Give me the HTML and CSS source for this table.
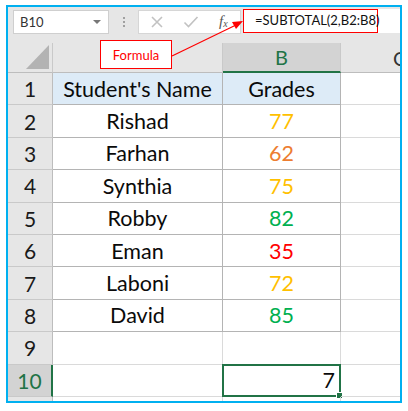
FILE: index.html
```html
<!DOCTYPE html>
<html>
<head>
<meta charset="utf-8">
<link rel="stylesheet" href="styles.css">
</head>
<body>
<div class="frame">
  <div class="toolbar">
    <div class="namebox"><span>B10</span><span class="dd"></span></div>
    <div class="dots"><i></i><i></i><i></i></div>
    <div class="fxbox">
      <svg class="ico x" width="14" height="14" viewBox="0 0 14 14"><path d="M2 2 L12 12 M12 2 L2 12" stroke="#c2c2c2" stroke-width="1.6" fill="none"/></svg>
      <svg class="ico chk" width="16" height="14" viewBox="0 0 16 14"><path d="M1.5 7.5 L5.5 11.5 L14.5 2" stroke="#c2c2c2" stroke-width="1.6" fill="none"/></svg>
      <span class="fx">f<sub>x</sub></span>
    </div>
    <div class="formulabar"><span class="formula">=SUBTOTAL(2,B2:B8)</span></div>
  </div>
  <div class="sheet">
    <div class="colhdr corner"><svg width="24" height="26" viewBox="0 0 24 26"><polygon points="0,25 23,25 23,1" fill="#b3b3b3"/></svg></div>
    <div class="colhdr"></div>
    <div class="colhdr sel">B</div>
    <div class="colhdr c"><span>C</span></div>

    <div class="rowhdr">1</div><div class="cell t head">Student's Name</div><div class="cell t head">Grades</div><div class="cell"></div>
    <div class="rowhdr">2</div><div class="cell t">Rishad</div><div class="cell t yel">77</div><div class="cell"></div>
    <div class="rowhdr">3</div><div class="cell t">Farhan</div><div class="cell t org">62</div><div class="cell"></div>
    <div class="rowhdr">4</div><div class="cell t">Synthia</div><div class="cell t yel">75</div><div class="cell"></div>
    <div class="rowhdr">5</div><div class="cell t">Robby</div><div class="cell t grn">82</div><div class="cell"></div>
    <div class="rowhdr">6</div><div class="cell t">Eman</div><div class="cell t red">35</div><div class="cell"></div>
    <div class="rowhdr">7</div><div class="cell t">Laboni</div><div class="cell t yel">72</div><div class="cell"></div>
    <div class="rowhdr">8</div><div class="cell t">David</div><div class="cell t grn">85</div><div class="cell"></div>
    <div class="rowhdr">9</div><div class="cell"></div><div class="cell"></div><div class="cell"></div>
    <div class="rowhdr selrow">10</div><div class="cell"></div><div class="cell active">7<span class="handle"></span></div><div class="cell"></div>
    <div class="rowhdr"></div><div class="cell"></div><div class="cell"></div><div class="cell"></div>
  </div>

  <div class="callout">Formula</div>
  <svg class="arrow" width="396" height="80" viewBox="0 0 396 80">
    <line x1="164" y1="49" x2="228" y2="18" stroke="#ff0000" stroke-width="1.2"/>
    <polygon points="235,14 224,15 228,22" fill="#ff0000"/>
  </svg>
</div>
</body>
</html>
```

FILE: styles.css
```css
html, body {
  margin: 0;
  padding: 0;
  background: #ffffff;
}
body {
  font-family: Lato, "Open Sans", sans-serif;
}
.frame {
  position: relative;
  margin: 5px 0 0 6px;
  width: 396px;
  height: 398px;
  border: 2px solid #00b0f0;
  box-sizing: border-box;
  overflow: hidden;
  background: #ffffff;
}
.toolbar {
  height: 36px;
  background: #e6e6e6;
  display: flex;
  align-items: flex-start;
  padding-top: 3px;
  box-sizing: border-box;
}
.namebox {
  margin-left: 5px;
  width: 96px;
  height: 24px;
  background: #fff;
  border: 1px solid #cfcfcf;
  box-sizing: border-box;
  display: flex;
  align-items: center;
  justify-content: space-between;
  padding: 0 7px 0 6px;
  font-size: 13px;
  color: #333;
}
.dd {
  width: 0;
  height: 0;
  border-left: 4px solid transparent;
  border-right: 4px solid transparent;
  border-top: 4px solid #777;
}
.dots {
  width: 29px;
  height: 24px;
  display: flex;
  flex-direction: column;
  align-items: center;
  justify-content: center;
  gap: 2px;
}
.dots i {
  display: block;
  width: 2px;
  height: 2px;
  background: #a0a0a0;
}
.fxbox {
  width: 103px;
  height: 24px;
  background: #fff;
  border: 1px solid #d6d6d6;
  box-sizing: border-box;
  position: relative;
}
.ico {
  position: absolute;
  top: 4px;
  display: block;
}
.ico.x { left: 11px; }
.ico.chk { left: 44px; }
.fx {
  position: absolute;
  left: 80px;
  top: 1px;
  font-family: "Liberation Serif", serif;
  font-style: italic;
  font-size: 15px;
  color: #555;
  line-height: 18px;
}
.fx sub {
  font-size: 10px;
  vertical-align: -1px;
}
.formulabar {
  margin-left: 2px;
  flex: 1;
  height: 24px;
  background: #fff;
  margin-top: -1px;
}
.formula {
  display: inline-block;
  width: 135px;
  height: 24px;
  border: 1.5px solid #ff0000;
  box-sizing: border-box;
  font-size: 13px;
  line-height: 21px;
  padding-left: 11px;
  color: #111;
}
.sheet {
  display: grid;
  grid-template-columns: 45px 170px 118px 1fr;
  grid-template-rows: 30px repeat(10, 32.4px) 10px;
}
.colhdr {
  background: #e6e6e6;
  border-right: 1px solid #c9c9c9;
  border-bottom: 1px solid #bdbdbd;
  box-sizing: border-box;
  display: flex;
  align-items: center;
  justify-content: center;
  font-size: 20px;
  color: #333;
}
.colhdr.corner {
  align-items: flex-end;
  justify-content: flex-end;
  padding: 0 2px 2px 0;
}
.colhdr.corner svg { display: block; }
.colhdr.sel {
  background: #d3d3d3;
  color: #217346;
  border-bottom: 2px solid #217346;
}
.colhdr.c {
  justify-content: flex-start;
  border-right: none;
  padding-left: 52px;
}
.rowhdr {
  background: #e6e6e6;
  border-right: 1px solid #bdbdbd;
  border-bottom: 1px solid #c9c9c9;
  box-sizing: border-box;
  display: flex;
  align-items: center;
  justify-content: center;
  font-size: 21px;
  color: #1a1a1a;
}
.rowhdr.selrow {
  background: #d3d3d3;
  color: #217346;
  border-right: 2px solid #217346;
}
.cell {
  border-right: 1px solid #dadada;
  border-bottom: 1px solid #dadada;
  box-sizing: border-box;
  display: flex;
  align-items: center;
  justify-content: center;
  font-size: 21.5px;
  color: #0a0a0a;
  position: relative;
}
.cell.t {
  border-right-color: #b4b4b4;
  border-bottom-color: #b4b4b4;
}
.cell.head { background: #ddebf7; }
.yel { color: #ffc000 !important; }
.org { color: #ed7d31 !important; }
.grn { color: #00b050 !important; }
.red { color: #ff0000 !important; }
.cell.active {
  border: 2px solid #217346;
  justify-content: flex-end;
  padding-right: 4px;
  margin: -1px 0 0 -1px;
}
.handle {
  position: absolute;
  right: -4px;
  bottom: -4px;
  width: 5px;
  height: 5px;
  background: #217346;
  border: 1px solid #fff;
}
.callout {
  position: absolute;
  left: 92px;
  top: 33px;
  width: 72px;
  height: 29px;
  border: 1.5px solid #ff0000;
  box-sizing: border-box;
  background: #fff;
  color: #ff0000;
  font-size: 13px;
  display: flex;
  align-items: center;
  justify-content: center;
}
.arrow {
  position: absolute;
  left: 0;
  top: 0;
  pointer-events: none;
}
```
